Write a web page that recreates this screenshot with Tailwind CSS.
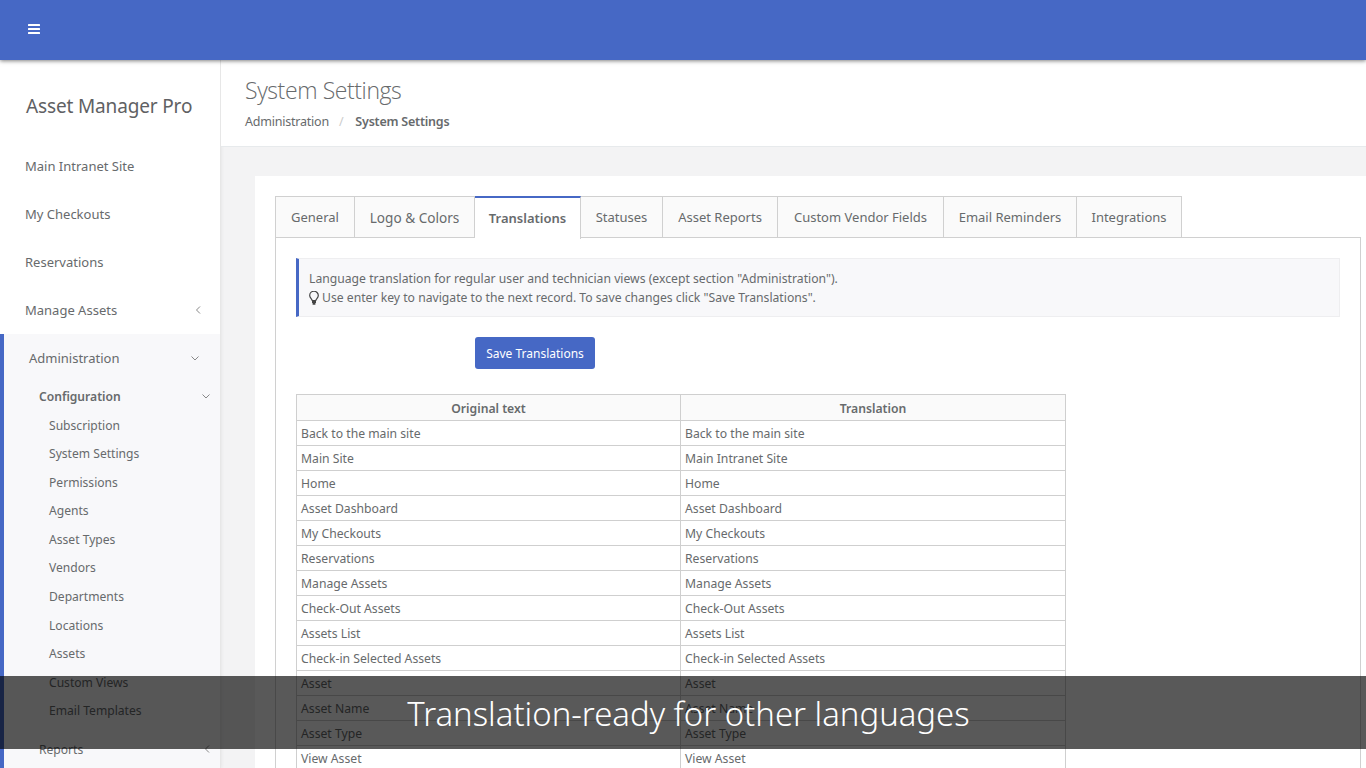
<!DOCTYPE html>
<html lang="en">
<head>
    <meta charset="UTF-8">
    <title>System Settings</title>
    <script src="https://cdn.jsdelivr.net/npm/@tailwindcss/browser@4"></script>
</head>
<body class="relative h-screen overflow-hidden bg-[#f3f3f4] font-['Noto_Sans',sans-serif] text-[13px] text-[#676a6c]">
    <!-- Top bar -->
    <header class="relative z-10 h-[60px] bg-[#4668c5] shadow-[0_1px_4px_rgba(0,0,0,0.5)] flex items-center pl-[28px] pb-[2px]">
        <svg width="12" height="10" viewBox="0 0 12 10" fill="#fff"><rect y="0" width="12" height="2" rx="0.5"/><rect y="4" width="12" height="2" rx="0.5"/><rect y="8" width="12" height="2" rx="0.5"/></svg>
    </header>

    <div class="flex h-[708px]">
        <!-- Sidebar -->
        <aside class="w-[221px] shrink-0 bg-white border-r border-[#e7e7e7] overflow-hidden shadow-[1px_0_3px_rgba(0,0,0,0.05)]">
            <div class="h-[82px] pl-[26px] pt-[32px] text-[19px] tracking-[-0.15px] leading-[28px] text-[#5f6163]">Asset Manager Pro</div>
            <a class="flex items-center h-[48px] pl-[25px] pt-[2px]">Main Intranet Site</a>
            <a class="flex items-center h-[48px] pl-[25px] pt-[2px]">My Checkouts</a>
            <a class="flex items-center h-[48px] pl-[25px] pt-[2px]">Reservations</a>
            <a class="flex items-center justify-between h-[48px] pl-[25px] pr-[18px] pt-[2px]">Manage Assets
                <svg class="-mt-[3px]" width="8" height="10" viewBox="0 0 8 10" fill="none" stroke="#888" stroke-width="1"><path d="M6 1.5 2.5 5 6 8.5"/></svg>
            </a>
            <div class="border-l-4 border-[#4668c5] bg-[#f8f8fa] h-[500px]">
                <a class="flex items-center justify-between h-[48px] pl-[25px] pr-[20px] pt-[2px]">Administration
                    <svg class="-mt-[3px]" width="10" height="8" viewBox="0 0 10 8" fill="none" stroke="#888" stroke-width="1"><path d="M1.5 2.5 5 6 8.5 2.5"/></svg>
                </a>
                <a class="flex items-center justify-between h-[29px] pl-[35px] pr-[9px] pt-[2px] font-semibold text-[12.1px]">Configuration
                    <svg class="-mt-[3px]" width="10" height="8" viewBox="0 0 10 8" fill="none" stroke="#888" stroke-width="1"><path d="M1.5 2.5 5 6 8.5 2.5"/></svg>
                </a>
                <div class="text-[12.1px] -mt-[0.5px]">
                    <a class="flex items-center h-[28.55px] pl-[45px] pt-[2px]">Subscription</a>
                    <a class="flex items-center h-[28.55px] pl-[45px] pt-[2px]">System Settings</a>
                    <a class="flex items-center h-[28.55px] pl-[45px] pt-[2px]">Permissions</a>
                    <a class="flex items-center h-[28.55px] pl-[45px] pt-[2px]">Agents</a>
                    <a class="flex items-center h-[28.55px] pl-[45px] pt-[2px]">Asset Types</a>
                    <a class="flex items-center h-[28.55px] pl-[45px] pt-[2px]">Vendors</a>
                    <a class="flex items-center h-[28.55px] pl-[45px] pt-[2px]">Departments</a>
                    <a class="flex items-center h-[28.55px] pl-[45px] pt-[2px]">Locations</a>
                    <a class="flex items-center h-[28.55px] pl-[45px] pt-[2px]">Assets</a>
                    <a class="flex items-center h-[28.55px] pl-[45px] pt-[2px]">Custom Views</a>
                    <a class="flex items-center h-[28.55px] pl-[45px] pt-[2px]">Email Templates</a>
                </div>
                <a class="flex items-center justify-between h-[28px] mt-[10.5px] pl-[35px] pr-[9px] pt-[2px] text-[12.1px]">Reports
                    <svg class="-mt-[3px]" width="8" height="10" viewBox="0 0 8 10" fill="none" stroke="#888" stroke-width="1"><path d="M6 1.5 2.5 5 6 8.5"/></svg>
                </a>
            </div>
        </aside>

        <main class="flex-1 min-w-0">
            <!-- Page heading -->
            <div class="h-[87px] bg-white border-b border-[#e7eaec] pl-[24px] pt-[15px]">
                <h2 class="font-['Open_Sans',sans-serif] text-[23px] tracking-[-0.4px] leading-[30px] font-light text-[#676a6c]">System Settings</h2>
                <div class="mt-[7px] flex items-center leading-[20px] text-[12.5px] tracking-[-0.22px]">
                    <span>Administration</span>
                    <span class="pl-[10px] pr-[12px] text-[#ccc]">/</span>
                    <strong class="font-semibold">System Settings</strong>
                </div>
            </div>

            <!-- Card -->
            <div class="ml-[34px] mt-[29px] bg-white p-[20px] pr-[5px] h-[600px]">
                <div class="flex h-[42px] relative z-[1]">
                    <div class="flex items-center justify-center pt-[2px] w-[80px] border border-[#d0d0d0] bg-[#fafafa]">General</div>
                    <div class="flex items-center justify-center pt-[2px] w-[120px] border border-l-0 border-[#d0d0d0] bg-[#fafafa] text-[13.6px]">Logo &amp; Colors</div>
                    <div class="flex items-center justify-center w-[106px] h-[43px] border-r border-[#d0d0d0] border-t-2 border-t-[#4668c5] bg-white font-semibold">Translations</div>
                    <div class="flex items-center justify-center pt-[2px] w-[82px] border border-l-0 border-[#d0d0d0] bg-[#fafafa]">Statuses</div>
                    <div class="flex items-center justify-center pt-[2px] w-[115px] border border-l-0 border-[#d0d0d0] bg-[#fafafa]">Asset Reports</div>
                    <div class="flex items-center justify-center pt-[2px] w-[166px] border border-l-0 border-[#d0d0d0] bg-[#fafafa]">Custom Vendor Fields</div>
                    <div class="flex items-center justify-center pt-[2px] w-[133px] border border-l-0 border-[#d0d0d0] bg-[#fafafa]">Email Reminders</div>
                    <div class="flex items-center justify-center pt-[2px] w-[105px] border border-l-0 border-[#d0d0d0] bg-[#fafafa]">Integrations</div>
                </div>
                <div class="border border-[#d0d0d0] -mt-px px-[20px] pt-[20px] h-[560px]">
                    <div class="h-[59px] border border-[#eeeef0] border-l-[3px] border-l-[#4668c5] bg-[#f8f8fa] pl-[10px] pt-[10px] text-[12.2px] leading-[19px]">
                        <div>Language translation for regular user and technician views (except section "Administration").</div>
                        <div class="flex items-center gap-[3px]">
                            <svg width="10" height="14" viewBox="0 0 10 14" fill="none" stroke="#444" stroke-width="1.2"><path d="M3.2 9.5C3 7.8.7 7 .7 4.5a4.3 4.3 0 0 1 8.6 0C9.3 7 7 7.8 6.8 9.5Z"/><path d="M3 11h4M3.6 12.8h2.8" stroke-width="1.8"/></svg>
                            <span>Use enter key to navigate to the next record. To save changes click "Save Translations".</span>
                        </div>
                    </div>
                    <button class="block ml-[179px] mt-[20px] h-[32px] w-[120px] pt-[2px] rounded-[3px] bg-[#4668c5] text-white text-[12px]">Save Translations</button>
                    <table class="mt-[25px] w-[770px] table-fixed border-collapse text-[12.2px]">
                        <thead>
                            <tr class="h-[26px] bg-[#fafafa]">
                                <th class="w-[384px] border border-[#cfcfcf] pt-[3px] font-semibold">Original text</th>
                                <th class="border border-[#cfcfcf] pt-[3px] font-semibold">Translation</th>
                            </tr>
                        </thead>
                        <tbody id="rows"></tbody>
                    </table>
                </div>
            </div>
        </main>
    </div>

    <!-- Caption overlay -->
    <div class="absolute left-0 right-0 top-[676px] h-[73px] z-20 bg-black/65 flex items-center justify-center pl-[11px] pt-[2px]">
        <span class="font-['Noto_Sans',sans-serif] font-light text-[32.9px] text-white">Translation-ready for other languages</span>
    </div>

    <script>
        const rows = [
            ['Back to the main site', 'Back to the main site'],
            ['Main Site', 'Main Intranet Site'],
            ['Home', 'Home'],
            ['Asset Dashboard', 'Asset Dashboard'],
            ['My Checkouts', 'My Checkouts'],
            ['Reservations', 'Reservations'],
            ['Manage Assets', 'Manage Assets'],
            ['Check-Out Assets', 'Check-Out Assets'],
            ['Assets List', 'Assets List'],
            ['Check-in Selected Assets', 'Check-in Selected Assets'],
            ['Asset', 'Asset'],
            ['Asset Name', 'Asset Name'],
            ['Asset Type', 'Asset Type'],
            ['View Asset', 'View Asset']
        ];
        const tbody = document.getElementById('rows');
        rows.forEach(r => {
            const tr = document.createElement('tr');
            tr.className = 'h-[25px]';
            r.forEach(text => {
                const td = document.createElement('td');
                td.className = 'border border-[#cfcfcf] px-[4px] pt-[2px] pb-0';
                td.textContent = text;
                tr.appendChild(td);
            });
            tbody.appendChild(tr);
        });
    </script>
</body>
</html>
